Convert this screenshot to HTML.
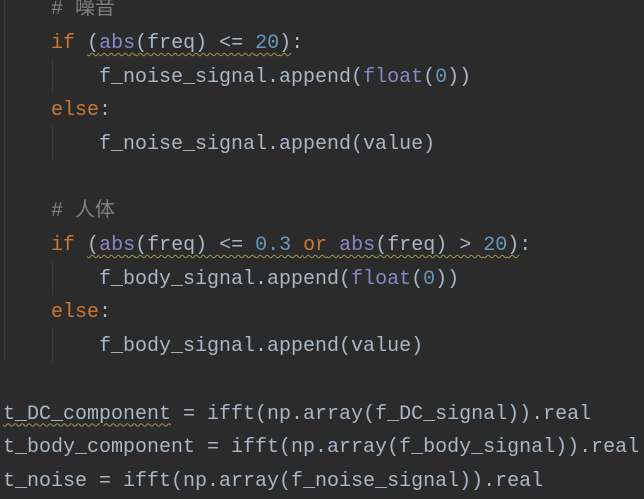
<!DOCTYPE html>
<html><head><meta charset="utf-8"><style>
html,body{margin:0;padding:0;background:#2b2b2b;width:644px;height:498px;overflow:hidden}
.c{position:absolute;left:3px;top:-6.85px;font-family:"Liberation Mono","Noto Sans CJK SC",monospace;font-size:20px;line-height:33.7px;color:#a9b7c6;white-space:pre}
.k{color:#cc7832}.n{color:#6897bb}.b{color:#8888c6}.m{color:#808080}
.w{text-decoration:underline wavy #a3954d;text-decoration-thickness:1px;text-underline-offset:4px}
.g{position:absolute;width:1px;background:#3b3b3b}
</style></head><body>
<div class="g" style="left:4px;top:0;height:360px"></div>
<div class="g" style="left:52px;top:59px;height:34px"></div>
<div class="g" style="left:52px;top:126px;height:34px"></div>
<div class="g" style="left:52px;top:261px;height:34px"></div>
<div class="g" style="left:52px;top:328px;height:34px"></div>
<div class="c"><span class="m">    # 噪音</span>
    <span class="k">if</span> <span class="w">(<span class="b">abs</span>(freq) &lt;= <span class="n">20</span>)</span>:
        f_noise_signal.append(<span class="b">float</span>(<span class="n">0</span>))
    <span class="k">else</span>:
        f_noise_signal.append(value)

<span class="m">    # 人体</span>
    <span class="k">if</span> <span class="w">(<span class="b">abs</span>(freq) &lt;= <span class="n">0.3</span> <span class="k">or</span> <span class="b">abs</span>(freq) &gt; <span class="n">20</span>)</span>:
        f_body_signal.append(<span class="b">float</span>(<span class="n">0</span>))
    <span class="k">else</span>:
        f_body_signal.append(value)

<span class="w">t_DC_component</span> = ifft(np.array(f_DC_signal)).real
t_body_component = ifft(np.array(f_body_signal)).real
t_noise = ifft(np.array(f_noise_signal)).real</div>
</body></html>
